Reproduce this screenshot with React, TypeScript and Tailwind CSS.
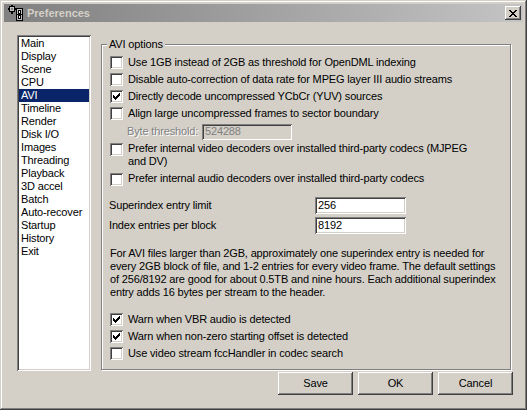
import React from "react";

const font = "font-['Liberation_Sans',Arial,sans-serif]";

// classic 3D edge helpers
const raised =
  "bg-[#d4d0c8] shadow-[inset_-1px_-1px_#404040,inset_1px_1px_#ffffff,inset_-2px_-2px_#808080,inset_2px_2px_#d4d0c8]";
const sunken =
  "shadow-[inset_1px_1px_#808080,inset_-1px_-1px_#ffffff,inset_2px_2px_#404040,inset_-2px_-2px_#d4d0c8]";

const checkPixels = [
  [6, 0],
  [5, 1], [6, 1],
  [0, 2], [4, 2], [5, 2], [6, 2],
  [0, 3], [1, 3], [3, 3], [4, 3], [5, 3],
  [0, 4], [1, 4], [2, 4], [3, 4], [4, 4],
  [1, 5], [2, 5], [3, 5],
  [2, 6],
];

function CheckBox({ checked }: { checked?: boolean }) {
  return (
    <div className={`relative w-[13px] h-[13px] shrink-0 bg-white ${sunken}`}>
      {checked && (
        <svg width="13" height="13" className="absolute left-0 top-0" shapeRendering="crispEdges">
          {checkPixels.map(([x, y]) => (
            <rect key={`${x}-${y}`} x={x + 3} y={y + 3} width="1" height="1" fill="#000" />
          ))}
        </svg>
      )}
    </div>
  );
}

function CheckRow({ label, checked }: { label: string; checked?: boolean }) {
  return (
    <div className="flex items-center h-[17px] gap-[5px]">
      <CheckBox checked={checked} />
      <span className="whitespace-nowrap">{label}</span>
    </div>
  );
}

function TextField({ value, disabled, className }: { value: string; disabled?: boolean; className: string }) {
  return (
    <div
      className={`flex items-center pl-[3px] ${sunken} ${disabled ? "bg-[#d4d0c8] text-[#808080]" : "bg-white"} ${className}`}
    >
      {value}
    </div>
  );
}

function Button({ label }: { label: string }) {
  return (
    <button className={`w-[75px] h-[23px] flex items-center justify-center ${raised}`}>{label}</button>
  );
}

function TitleIcon() {
  return (
    <svg width="16" height="16" viewBox="0 0 16 16" shapeRendering="crispEdges">
      {/* gear */}
      <g fill="#000">
        <rect x="3" y="0" width="2" height="2" />
        <rect x="3" y="7" width="2" height="2" />
        <rect x="0" y="3" width="2" height="2" />
        <rect x="7" y="3" width="2" height="2" />
        <rect x="1" y="1" width="1" height="1" />
        <rect x="6" y="1" width="1" height="1" />
        <rect x="1" y="6" width="1" height="1" />
        <rect x="6" y="6" width="1" height="1" />
      </g>
      <rect x="1.5" y="1.5" width="5" height="5" fill="#c0c0c0" stroke="#000" />
      <rect x="3" y="3" width="2" height="2" fill="#808080" />
      {/* film strip */}
      <rect x="8.5" y="3.5" width="6" height="12" fill="#c0c0c0" stroke="#000" />
      <rect x="10.5" y="5.5" width="2" height="3" fill="#fff" stroke="#000" />
      <rect x="10.5" y="10.5" width="2" height="3" fill="#fff" stroke="#000" />
      <line x1="8" y1="9.5" x2="15" y2="9.5" stroke="#000" />
    </svg>
  );
}

const pages = [
  "Main", "Display", "Scene", "CPU", "AVI", "Timeline", "Render", "Disk I/O", "Images",
  "Threading", "Playback", "3D accel", "Batch", "Auto-recover", "Startup", "History", "Exit",
];

export default function App() {
  return (
    <div
      className={`w-[527px] h-[410px] bg-[#d4d0c8] p-[4px] flex flex-col text-[11px] leading-[13px] tracking-[-0.15px] text-black ${font} shadow-[inset_-1px_-1px_#404040,inset_1px_1px_#d4d0c8,inset_-2px_-2px_#808080,inset_2px_2px_#ffffff]`}
    >
      {/* Title bar (inactive) */}
      <div className="h-[18px] flex items-center pl-[4px] pr-[2px] bg-gradient-to-r from-[#808080] to-[#c4c4c4]">
        <TitleIcon />
        <span className="ml-[3px] font-bold text-[#d4d0c8] text-[11px] tracking-normal">Preferences</span>
        <div className={`ml-auto w-[16px] h-[14px] flex items-center justify-center ${raised}`}>
          <svg width="8" height="7" viewBox="0 0 8 7" shapeRendering="crispEdges">
            <path d="M0 0h2v1h-2zM6 0h2v1h-2zM1 1h2v1h-2zM5 1h2v1h-2zM2 2h4v1h-4zM3 3h2v1h-2zM2 4h4v1h-4zM1 5h2v1h-2zM5 5h2v1h-2zM0 6h2v1h-2zM6 6h2v1h-2z" fill="#000" />
          </svg>
        </div>
      </div>

      {/* Body */}
      <div className="flex flex-col pl-[13px] pt-[13px]">
        <div className="flex h-[336px] gap-[10px]">
          {/* Page list */}
          <div className={`w-[74px] h-[336px] bg-white p-[2px] ${sunken}`}>
            {pages.map((p) => (
              <div
                key={p}
                className={`h-[13px] flex items-center pl-[2px] whitespace-nowrap ${
                  p === "AVI" ? "bg-[#0a246a] text-white" : ""
                }`}
              >
                {p}
              </div>
            ))}
          </div>

          {/* AVI options group */}
          <div className="relative mt-[9px] w-[410px] h-[326px] border border-[#808080] shadow-[inset_1px_1px_#ffffff,1px_1px_#ffffff] pl-[8px] pt-[9px]">
            <span className="absolute left-[5px] top-[-7px] px-[2px] bg-[#d4d0c8]">AVI options</span>

            <CheckRow label="Use 1GB instead of 2GB as threshold for OpenDML indexing" />
            <CheckRow label="Disable auto-correction of data rate for MPEG layer III audio streams" />
            <CheckRow label="Directly decode uncompressed YCbCr (YUV) sources" checked />
            <CheckRow label="Align large uncompressed frames to sector boundary" />

            <div className="flex items-center h-[17px] mt-[1px] pl-[17px]">
              <span className="w-[75px] whitespace-nowrap text-[#808080] [text-shadow:1px_1px_0_#ffffff]">
                Byte threshold:
              </span>
              <TextField value="524288" disabled className="w-[90px] h-[16px]" />
            </div>

            <div className="flex items-start gap-[5px] mt-[2px]">
              <div className="mt-[1px]">
                <CheckBox />
              </div>
              <span className="whitespace-nowrap">
                Prefer internal video decoders over installed third-party codecs (MJPEG
                <br />
                and DV)
              </span>
            </div>

            <div className="flex items-start gap-[5px] mt-[4px]">
              <div className="mt-[1px]">
                <CheckBox />
              </div>
              <span className="whitespace-nowrap">Prefer internal audio decoders over installed third-party codecs</span>
            </div>

            <div className="flex items-center h-[17px] mt-[11px] ml-[-1px]">
              <span className="w-[206px]">Superindex entry limit</span>
              <TextField value="256" className="w-[91px] h-[17px]" />
            </div>
            <div className="flex items-center h-[17px] mt-[3px] ml-[-1px]">
              <span className="w-[206px]">Index entries per block</span>
              <TextField value="8192" className="w-[91px] h-[17px]" />
            </div>

            <p className="mt-[13px] whitespace-nowrap">
              For AVI files larger than 2GB, approximately one superindex entry is needed for
              <br />
              every 2GB block of file, and 1-2 entries for every video frame. The default settings
              <br />
              of 256/8192 are good for about 0.5TB and nine hours. Each additional superindex
              <br />
              entry adds 16 bytes per stream to the header.
            </p>

            <div className="mt-[12px]">
              <CheckRow label="Warn when VBR audio is detected" checked />
              <CheckRow label="Warn when non-zero starting offset is detected" checked />
              <CheckRow label="Use video stream fccHandler in codec search" />
            </div>
          </div>
        </div>

        {/* Buttons */}
        <div className="flex justify-end gap-[5px] pr-[10px] mt-[1px]">
          <Button label="Save" />
          <Button label="OK" />
          <Button label="Cancel" />
        </div>
      </div>
    </div>
  );
}
